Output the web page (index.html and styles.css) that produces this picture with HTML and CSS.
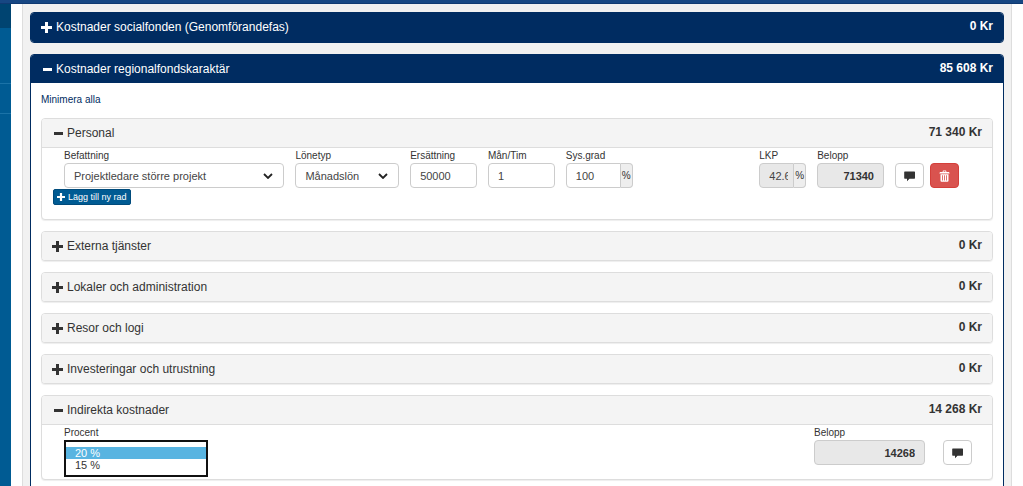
FILE: index.html
```html
<!DOCTYPE html>
<html lang="sv">
<head>
<meta charset="utf-8">
<title>Kostnader</title>
<link rel="stylesheet" href="styles.css">
</head>
<body>
<svg class="sprite" aria-hidden="true">
  <symbol id="plus" viewBox="0 0 11 11"><path d="M4 0h3v4h4v3H7v4H4V7H0V4h4z"/></symbol>
  <symbol id="minus" viewBox="0 0 11 11"><path d="M2 4h9v3H2z"/></symbol>
  <symbol id="comment" viewBox="0 0 11 11"><path d="M.8 1h9.600q.6 0 .6.6v6q0 .6-.6.6H5.500L3 10.800V8.200H.8Q.2 8.200.2 7.600v-6Q.2 1 .8 1z"/></symbol>
  <symbol id="trash" viewBox="0 0 11 12"><path fill-rule="evenodd" d="M1 2h2.500L4 .5h3L7.500 2H10l.7 1.500H.3zM4.500 2h2L6.300 1.300H4.700zM1.500 4.200h8v6.600q0 1-1 1h-6q-1 0-1-1zM3 5.200v5.300h.8V5.200zm2.100 0v5.300h.8V5.200zm2.100 0v5.300H8V5.200z"/></symbol>
</svg>
<header class="topbar"></header>
<div class="page">
  <nav class="sidebar" aria-label="Meny"><span class="side-item side-active"></span><span class="side-item"></span><span class="side-item side-short"></span></nav>
  <main class="content">
    <section class="group">
      <h2 class="group-head"><button class="toggle" type="button"><svg class="icon"><use href="#plus"/></svg>Kostnader socialfonden (Genomförandefas)</button><strong class="sum">0 Kr</strong></h2>
    </section>
    <section class="group group-open">
      <h2 class="group-head"><button class="toggle" type="button"><svg class="icon"><use href="#minus"/></svg>Kostnader regionalfondskaraktär</button><strong class="sum">85 608 Kr</strong></h2>
      <div class="group-body">
        <a class="collapse" href="#">Minimera alla</a>
        <section class="panel">
          <h3 class="panel-head panel-head-open"><button class="toggle" type="button"><svg class="icon"><use href="#minus"/></svg>Personal</button><strong class="sum">71 340 Kr</strong></h3>
          <form class="staff">
            <div class="field"><label for="role">Befattning</label><select class="control drop" id="role"><option>Projektledare större projekt</option></select></div>
            <div class="field"><label for="wage">Lönetyp</label><select class="control drop" id="wage"><option>Månadslön</option></select></div>
            <div class="field"><label for="pay">Ersättning</label><input class="control" id="pay" value="50000"></div>
            <div class="field"><label for="months">Mån/Tim</label><input class="control" id="months" value="1"></div>
            <div class="field"><label for="degree">Sys.grad</label><div class="addon"><input class="control" id="degree" value="100"><span class="unit">%</span></div></div>
            <div class="field lkp"><label for="lkp">LKP</label><div class="addon"><input class="control readonly" id="lkp" value="42.68" readonly><span class="unit">%</span></div></div>
            <div class="field"><label for="amount">Belopp</label><input class="control readonly amount" id="amount" value="71340" readonly></div>
            <div class="actions"><button class="btn" type="button" aria-label="Kommentar"><svg class="icon"><use href="#comment"/></svg></button><button class="btn danger" type="button" aria-label="Ta bort"><svg class="icon"><use href="#trash"/></svg></button></div>
          </form>
          <button class="add" type="button"><svg class="icon icon-small"><use href="#plus"/></svg>Lägg till ny rad</button>
        </section>
        <section class="panel"><h3 class="panel-head"><button class="toggle" type="button"><svg class="icon"><use href="#plus"/></svg>Externa tjänster</button><strong class="sum">0 Kr</strong></h3></section>
        <section class="panel"><h3 class="panel-head"><button class="toggle" type="button"><svg class="icon"><use href="#plus"/></svg>Lokaler och administration</button><strong class="sum">0 Kr</strong></h3></section>
        <section class="panel"><h3 class="panel-head"><button class="toggle" type="button"><svg class="icon"><use href="#plus"/></svg>Resor och logi</button><strong class="sum">0 Kr</strong></h3></section>
        <section class="panel"><h3 class="panel-head"><button class="toggle" type="button"><svg class="icon"><use href="#plus"/></svg>Investeringar och utrustning</button><strong class="sum">0 Kr</strong></h3></section>
        <section class="panel">
          <h3 class="panel-head panel-head-open"><button class="toggle" type="button"><svg class="icon"><use href="#minus"/></svg>Indirekta kostnader</button><strong class="sum">14 268 Kr</strong></h3>
          <form class="indirect">
            <div class="field percent"><label for="percent">Procent</label><select class="listbox" id="percent" size="2"><option selected>20 %</option><option>15 %</option></select></div>
            <div class="field total"><label for="total">Belopp</label><input class="control readonly amount" id="total" value="14268" readonly></div>
            <div class="actions"><button class="btn" type="button" aria-label="Kommentar"><svg class="icon"><use href="#comment"/></svg></button></div>
          </form>
        </section>
      </div>
    </section>
  </main>
</div>
</body>
</html>
```
FILE: styles.css
```css
* { box-sizing: border-box; }
html { overflow: hidden; }
body {
  margin: 0;
  height: 100vh;
  display: flex;
  flex-direction: column;
  overflow: hidden;
  background: #fff;
  color: #333;
  font: 10px/14px "Liberation Sans", Arial, sans-serif;
}
button, input, select { font: inherit; color: inherit; margin: 0; }
.sprite { display: none; }
.topbar { flex: none; height: 4px; background: #174783; border-bottom: 1px solid #103a72; }
.page { flex: 1; display: flex; min-height: 0; }
.sidebar { width: 11px; margin-right: 11px; flex: none; background: #005b93; display: flex; flex-direction: column; }
.side-item { height: 56px; border-bottom: 1px solid #1b73a8; }
.side-active { height: 24px; background: #004471; border: 0; }
.side-short { height: 30px; }
.content {
  flex: 1;
  min-width: 0;
  margin-right: 11px;
  padding: 8px 7px 0;
  background: #f1f1f1;
  border: 1px solid #ddd;
  border-width: 0 1px;
}
.group { border: 1px solid #002c61; border-radius: 4px; overflow: hidden; margin-bottom: 11px; background: #fff; }
.group-head, .panel-head { display: flex; justify-content: space-between; margin: 0; font-size: 12px; font-weight: 400; line-height: 16px; }
.group-head { padding: 6px 10px; background: #002c61; color: #fff; }
.group:first-child .group-head { padding-bottom: 7px; }
.toggle { display: flex; align-items: center; padding: 0; border: 0; background: none; }
.icon { width: 11px; height: 11px; margin-right: 4px; fill: currentColor; }
.sum { line-height: 14px; }
.group-body { padding: 10px 10px 20px; display: flex; flex-direction: column; gap: 11px; }
.collapse { align-self: flex-start; color: #002c61; text-decoration: none; }
.panel { border: 1px solid #ddd; border-radius: 4px; overflow: hidden; background: #fff; box-shadow: 0 1px 1px #eee; }
.panel-head { padding: 6px 10px; background: #f4f4f4; }
.panel-head-open { border-bottom: 1px solid #ddd; }
.staff {
  display: grid;
  grid-template-columns: 221fr 104fr 67fr 67fr 67fr 105fr 47fr 67fr auto;
  column-gap: 11px;
  padding: 1px 33px 0 22px;
}
.field { display: flex; flex-direction: column; min-width: 0; }
.lkp { grid-column: 7; }
.lkp .control { padding-right: 5px; }
.control {
  width: 100%;
  min-width: 0;
  height: 25px;
  padding: 0 9px;
  border: 1px solid #ccc;
  border-radius: 4px;
  background: #fff;
  color: #444;
  font-size: 11px;
}
.drop {
  appearance: none;
  background: #fff url("data:image/svg+xml,%3Csvg xmlns='http://www.w3.org/2000/svg' viewBox='0 0 10 6'%3E%3Cpath d='M1 1l4 4 4-4' fill='none' stroke='%23222' stroke-width='1.8'/%3E%3C/svg%3E") no-repeat right 10px center / 10px 6px;
}
.readonly { background: #e8e8e8; }
.amount { text-align: right; font-weight: 700; color: #333; }
.addon { display: flex; }
.addon .control { border-radius: 4px 0 0 4px; }
.unit {
  flex: none;
  width: 12px;
  line-height: 23px;
  text-align: center;
  border: 1px solid #ccc;
  border-left: 0;
  border-radius: 0 4px 4px 0;
  background: #eee;
}
.actions { display: flex; gap: 6px; align-items: flex-end; }
.btn { width: 29px; height: 25px; padding: 0; display: flex; align-items: center; justify-content: center; border: 1px solid #ccc; border-radius: 4px; background: #fff; }
.btn .icon { margin: 0; height: 12px; }
.danger { background: #d9534f; border-color: #d43f3a; color: #fff; }
.add { display: flex; align-items: center; height: 16px; margin: 1px 0 14px 11px; padding: 0 3px; border: 1px solid #004b7c; border-radius: 2px; background: #005b93; color: #fff; font-size: 9px; }
.icon-small { width: 8px; height: 8px; margin-right: 3px; }
.indirect { display: flex; gap: 18px; padding: 1px 20px 2px 22px; align-items: flex-start; }
.percent { width: 144px; margin-right: auto; }
.total { width: 111px; }
.indirect .actions { padding-top: 14px; }
.listbox { height: 37px; padding: 5px 0 0; border: 2px solid #111; border-radius: 0; background: #fff; overflow: hidden; font-size: 11px; outline: 0; scrollbar-width: none; }
.listbox option { min-height: 0; height: 12px; line-height: 12px; padding: 0 9px; }
.listbox option:checked { background: linear-gradient(#58b4e1, #58b4e1); -webkit-text-fill-color: #fff; }
```
